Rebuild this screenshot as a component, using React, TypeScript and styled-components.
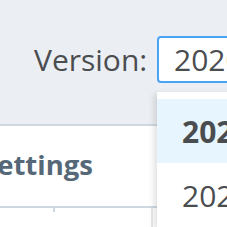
import styled, { createGlobalStyle } from 'styled-components';

const GlobalStyle = createGlobalStyle`
  html, body {
    margin: 0;
    padding: 0;
    background: #ebeef2;
    font-family: "Open Sans", "Liberation Sans", sans-serif;
  }
`;

const Page = styled.div`
  width: 227px;
  height: 227px;
  overflow: hidden;
  position: relative;
  background: #ebeef2;
`;

const Header = styled.div`
  height: 124px;
  display: flex;
  align-items: flex-start;
  padding-top: 36px;
  box-sizing: border-box;
`;

const Label = styled.span`
  flex-shrink: 0;
  margin-left: 34px;
  width: 123px;
  font-size: 30px;
  line-height: 47px;
  color: #4a4d50;
`;

const SelectBox = styled.div`
  flex-shrink: 0;
  width: 200px;
  height: 47px;
  box-sizing: border-box;
  border: 2px solid #4aa3f5;
  border-radius: 4px;
  background: #fff;
  padding-left: 15px;
  font-size: 30px;
  line-height: 43px;
  color: #4a4d50;
`;

const Menu = styled.div`
  position: absolute;
  left: 157px;
  top: 92px;
  width: 200px;
  padding-top: 7px;
  background: #fff;
  box-shadow: -3px 2px 6px rgba(0, 0, 0, 0.12);
`;

const MenuItem = styled.div<{ $active?: boolean }>`
  height: 64px;
  padding-left: 25px;
  display: flex;
  align-items: center;
  font-size: 30px;
  color: #4a4d50;
  font-weight: ${p => (p.$active ? 700 : 400)};
  background: ${p => (p.$active ? '#e6f5fe' : '#fff')};
`;

const Panel = styled.div`
  background: #fff;
  border-top: 2px solid #cfd8e0;
`;

const PanelTitle = styled.div`
  height: 82px;
  box-sizing: border-box;
  padding-bottom: 3px;
  display: flex;
  align-items: center;
  margin-left: -18px;
  font-size: 27.5px;
  font-weight: 700;
  color: #566878;
  border-bottom: 2px solid #cfd8e0;
`;

const Row = styled.div`
  display: grid;
  grid-template-columns: 54px 99px 1fr;
  height: 40px;
`;

const Cell = styled.div<{ $tick?: boolean; $line?: boolean }>`
  border-right: ${p => (p.$line ? '2px solid #e6e9ec' : 'none')};
  position: relative;
  &::after {
    content: '';
    display: ${p => (p.$tick ? 'block' : 'none')};
    position: absolute;
    right: -1px;
    top: 0;
    width: 2px;
    height: 4px;
    background: #cfd8e0;
  }
`;

export default function App() {
  return (
    <Page>
      <GlobalStyle />
      <Header>
        <Label>Version:</Label>
        <SelectBox>2020</SelectBox>
      </Header>
      <Panel>
        <PanelTitle>Settings</PanelTitle>
        <Row>
          <Cell $tick />
          <Cell $line />
          <Cell />
        </Row>
      </Panel>
      <Menu>
        <MenuItem $active>2020</MenuItem>
        <MenuItem>2020</MenuItem>
      </Menu>
    </Page>
  );
}
